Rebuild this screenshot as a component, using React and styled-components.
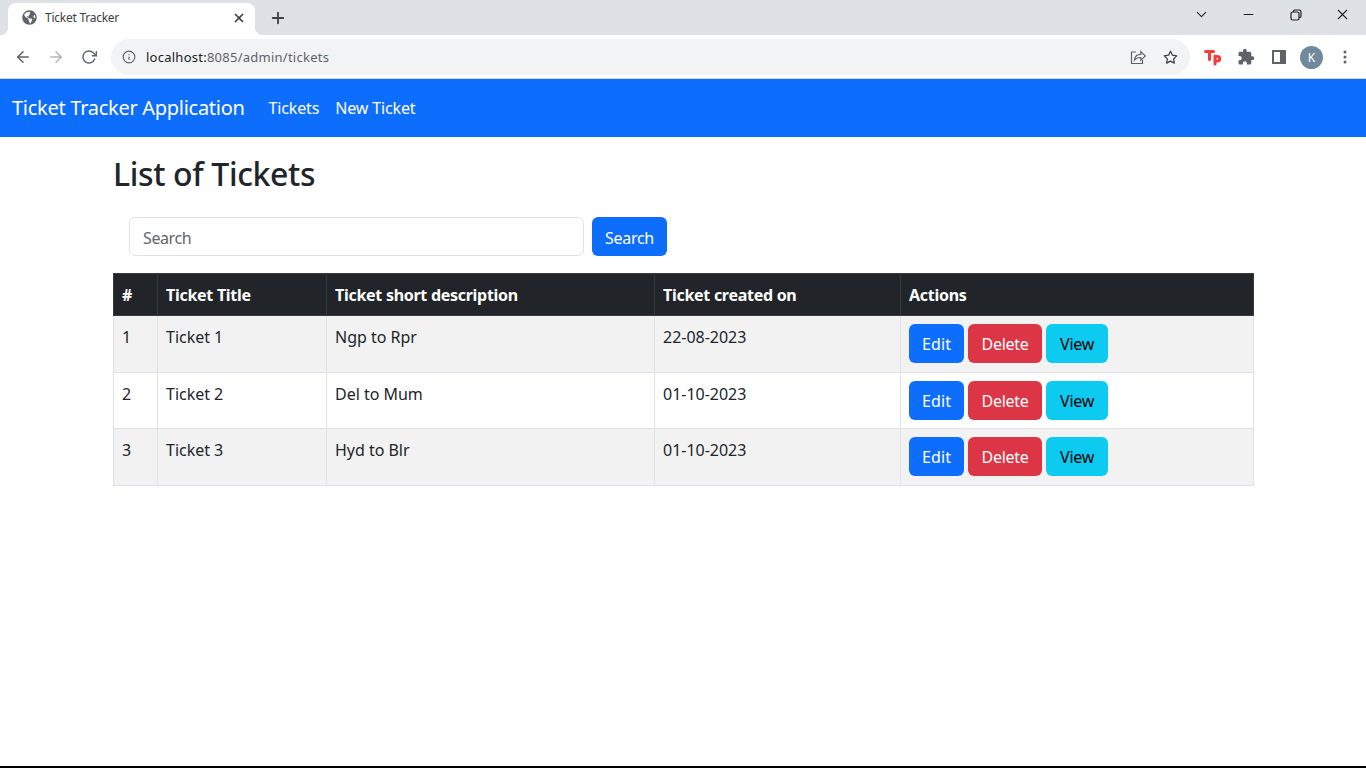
import React from "react";
import styled, { createGlobalStyle } from "styled-components";
import { FiArrowLeft, FiArrowRight, FiRotateCw, FiInfo, FiStar, FiPlus, FiX, FiMinus, FiChevronDown } from "react-icons/fi";
import { FaGlobeAmericas } from "react-icons/fa";
import { MdExtension } from "react-icons/md";

const GlobalStyle = createGlobalStyle`
  * { box-sizing: border-box; }
  html, body { margin: 0; padding: 0; height: 100%; background: #fff; }
  body { font-family: "Noto Sans", "Open Sans", sans-serif; color: #212529; overflow: hidden; }
`;

const Page = styled.div`
  height: 768px;
  display: flex;
  flex-direction: column;
  border-bottom: 2px solid #000;
`;

const TabStrip = styled.div`
  height: 35px;
  background: #dee1e6;
  display: flex;
  align-items: flex-end;
  padding-left: 8px;
  color: #202124;
`;

const Tab = styled.div`
  position: relative;
  width: 247px;
  height: 32px;
  background: #fff;
  border-radius: 8px 8px 0 0;
  display: flex;
  align-items: center;
  padding: 0 9px 3px 14px;
  font-size: 12px;
  letter-spacing: -0.25px;
  color: #3c4043;

  &::before, &::after {
    content: "";
    position: absolute;
    bottom: 0;
    width: 8px;
    height: 8px;
  }
  &::before { left: -8px; background: radial-gradient(circle at 0 0, #dee1e6 8px, #fff 8.5px); }
  &::after { right: -8px; background: radial-gradient(circle at 100% 0, #dee1e6 8px, #fff 8.5px); }
`;

const TabTitle = styled.span`
  flex: 1;
  margin-left: 8px;
`;

const NewTab = styled.div`
  margin-left: 14px;
  height: 32px;
  display: flex;
  align-items: center;
  padding-bottom: 3px;
`;

const WindowControls = styled.div`
  margin-left: auto;
  height: 35px;
  display: flex;
  align-items: center;
  padding-bottom: 6px;
`;

const WindowButton = styled.div`
  width: 47px;
  display: flex;
  justify-content: center;
`;

const Toolbar = styled.div`
  height: 44px;
  background: #fff;
  border-bottom: 1px solid #d3d6da;
  display: flex;
  align-items: center;
  padding-left: 6px;
  padding-top: 1px;
`;

const NavIcon = styled.div`
  width: 33px;
  display: flex;
  justify-content: center;
  align-items: center;
  color: ${(p) => (p.$muted ? "#b4b6b9" : "#5f6368")};
`;

const AddressBar = styled.div`
  width: 1079px;
  height: 36px;
  margin: 0 6px 0 6px;
  border-radius: 18px;
  background: #f1f3f4;
  display: flex;
  align-items: center;
  padding: 0 3px 0 11px;
  color: #5f6368;
`;

const Url = styled.div`
  flex: 1;
  margin-left: 10px;
  font-size: 13px;
  letter-spacing: 0.25px;
  color: #5f6368;
  b { font-weight: 400; color: #202124; }
`;

const BarIcon = styled.div`
  width: 33px;
  display: flex;
  justify-content: center;
  align-items: center;
  color: ${(p) => p.$color || "#5f6368"};
`;

const Avatar = styled.div`
  width: 23px;
  height: 23px;
  border-radius: 50%;
  background: #6f8b9b;
  color: #fff;
  font-size: 12px;
  display: flex;
  align-items: center;
  justify-content: center;
`;

const Navbar = styled.nav`
  height: 58px;
  background: #0d6efd;
  display: flex;
  align-items: center;
  padding-left: 12px;
`;

const Brand = styled.a`
  font-size: 20px;
  line-height: 26px;
  letter-spacing: -0.28px;
  color: #fff;
  margin-right: 24px;
`;

const NavLink = styled.a`
  font-size: 16px;
  letter-spacing: -0.15px;
  color: #fff;
  margin-right: 16px;
`;

const Container = styled.main`
  width: 1140px;
  margin-left: 113px;
`;

const Heading = styled.h1`
  margin: 0;
  padding-top: 16px;
  height: 80px;
  font-size: 32px;
  line-height: 42px;
  font-weight: 500;
  letter-spacing: -0.36px;
`;

const SearchForm = styled.form`
  display: flex;
  gap: 8px;
  padding-left: 16px;
  margin-bottom: 17px;
`;

const SearchInput = styled.input`
  width: 455px;
  height: 39px;
  padding: 2px 13px 0;
  border: 1px solid #dee2e6;
  border-radius: 6px;
  font: inherit;
  font-size: 16px;
  letter-spacing: -0.4px;
  outline: none;
  &::placeholder { color: #62666a; opacity: 1; }
`;

const Button = styled.button`
  width: ${(p) => p.$w}px;
  height: 39px;
  padding: 0;
  border: 0;
  border-radius: 6px;
  font: inherit;
  font-size: 16px;
  letter-spacing: ${(p) => (p.$loose ? "0.1px" : "-0.3px")};
  color: ${(p) => p.$text || "#fff"};
  background: ${(p) => p.$bg || "#0d6efd"};
`;

const SearchButton = styled(Button)`
  padding-top: 2px;
`;

const Table = styled.table`
  width: 1140px;
  table-layout: fixed;
  border-collapse: collapse;
  font-size: 16px;
`;

const Th = styled.th`
  height: 42px;
  padding: 0 8px;
  background: #212529;
  color: #fff;
  border: 1px solid #373b3e;
  text-align: left;
  font-weight: 700;
  letter-spacing: -0.28px;
`;

const Row = styled.tr`
  background: ${(p) => (p.$striped ? "#f2f2f2" : "#fff")};
`;

const Td = styled.td`
  height: ${(p) => p.$h}px;
  padding: 8px;
  border: 1px solid #dee2e6;
  vertical-align: top;
  color: #212529;
  line-height: 26px;
  letter-spacing: -0.02px;
`;

const Actions = styled.div`
  display: flex;
  gap: 4px;
`;

const columns = [
  ["#", 44],
  ["Ticket Title", 169],
  ["Ticket short description", 328],
  ["Ticket created on", 246],
  ["Actions", 353],
];

const tickets = [
  { id: 1, title: "Ticket 1", desc: "Ngp to Rpr", date: "22-08-2023", h: 57 },
  { id: 2, title: "Ticket 2", desc: "Del to Mum", date: "01-10-2023", h: 56 },
  { id: 3, title: "Ticket 3", desc: "Hyd to Blr", date: "01-10-2023", h: 57 },
];

export default function App() {
  return (
    <Page>
      <GlobalStyle />
      <TabStrip>
        <Tab>
          <FaGlobeAmericas size={15} color="#5f6368" />
          <TabTitle>Ticket Tracker</TabTitle>
          <FiX size={14} strokeWidth={3} color="#3c4043" />
        </Tab>
        <NewTab><FiPlus size={18} strokeWidth={2.4} color="#3c4043" /></NewTab>
        <WindowControls>
          <WindowButton><FiChevronDown size={17} strokeWidth={1.5} /></WindowButton>
          <WindowButton><FiMinus size={15} strokeWidth={1.8} /></WindowButton>
          <WindowButton>
            <svg width="12" height="12" viewBox="0 0 12 12" fill="none" stroke="#202124" strokeWidth="1.2">
              <rect x="1" y="3" width="8" height="8" rx="1.5" />
              <path d="M3.5 3V2.2A1.2 1.2 0 0 1 4.7 1h4.6A1.7 1.7 0 0 1 11 2.700v4.600A1.200 1.200 0 0 1 9.800 8.500H9" />
            </svg>
          </WindowButton>
          <WindowButton><FiX size={17} strokeWidth={1.6} /></WindowButton>
        </WindowControls>
      </TabStrip>
      <Toolbar>
        <NavIcon><FiArrowLeft size={18} strokeWidth={2} /></NavIcon>
        <NavIcon $muted><FiArrowRight size={18} strokeWidth={2} /></NavIcon>
        <NavIcon><FiRotateCw size={16} strokeWidth={2.2} /></NavIcon>
        <AddressBar>
          <FiInfo size={14} strokeWidth={2} />
          <Url><b>localhost:</b>8085/admin/tickets</Url>
          <BarIcon>
            <svg width="16" height="16" viewBox="0 0 16 16" fill="none" stroke="#5f6368" strokeWidth="1.2">
              <path d="M6 3H1.500v11.500h11V11" />
              <path d="M4.500 11c.4-3.800 3-5.600 6.300-5.600V2.600L15.500 7l-4.700 4.200V8.500C8 8.500 5.800 9.300 4.500 11z" />
            </svg>
          </BarIcon>
          <BarIcon $color="#3c4043"><FiStar size={15} strokeWidth={2} /></BarIcon>
        </AddressBar>
        <BarIcon>
          <svg width="18" height="17" viewBox="0 0 18 17" fill="none" stroke="#f33d3d" strokeWidth="3" strokeLinecap="round" strokeLinejoin="round">
            <path d="M1.500 2.500h8M5.500 2.500v8" />
            <path d="M11 7v8M11 7.500h2.500a2.200 2.200 0 0 1 0 4.400H11" />
          </svg>
        </BarIcon>
        <BarIcon><MdExtension size={18} /></BarIcon>
        <BarIcon>
          <svg width="14" height="14" viewBox="0 0 14 14">
            <path d="M0 0h14v14H0zM2 2v10h6V2z" fill="#5f6368" fillRule="evenodd" />
          </svg>
        </BarIcon>
        <BarIcon><Avatar>K</Avatar></BarIcon>
        <BarIcon>
          <svg width="4" height="14" viewBox="0 0 4 14" fill="#5f6368">
            <circle cx="2" cy="2" r="1.500" />
            <circle cx="2" cy="7" r="1.500" />
            <circle cx="2" cy="12" r="1.500" />
          </svg>
        </BarIcon>
      </Toolbar>
      <Navbar>
        <Brand>Ticket Tracker Application</Brand>
        <NavLink>Tickets</NavLink>
        <NavLink>New Ticket</NavLink>
      </Navbar>
      <Container>
        <Heading>List of Tickets</Heading>
        <SearchForm onSubmit={(e) => e.preventDefault()}>
          <SearchInput placeholder="Search" />
          <SearchButton $w={75}>Search</SearchButton>
        </SearchForm>
        <Table>
          <colgroup>
            {columns.map(([label, w]) => <col key={label} width={w} />)}
          </colgroup>
          <thead>
            <tr>{columns.map(([label]) => <Th key={label}>{label}</Th>)}</tr>
          </thead>
          <tbody>
            {tickets.map((t, i) => (
              <Row key={t.id} $striped={i % 2 === 0}>
                <Td $h={t.h}>{t.id}</Td>
                <Td $h={t.h}>{t.title}</Td>
                <Td $h={t.h}>{t.desc}</Td>
                <Td $h={t.h}>{t.date}</Td>
                <Td $h={t.h}>
                  <Actions>
                    <Button $w={55} $loose>Edit</Button>
                    <Button $w={74} $bg="#dc3545">Delete</Button>
                    <Button $w={62} $bg="#0dcaf0" $text="#000">View</Button>
                  </Actions>
                </Td>
              </Row>
            ))}
          </tbody>
        </Table>
      </Container>
    </Page>
  );
}
